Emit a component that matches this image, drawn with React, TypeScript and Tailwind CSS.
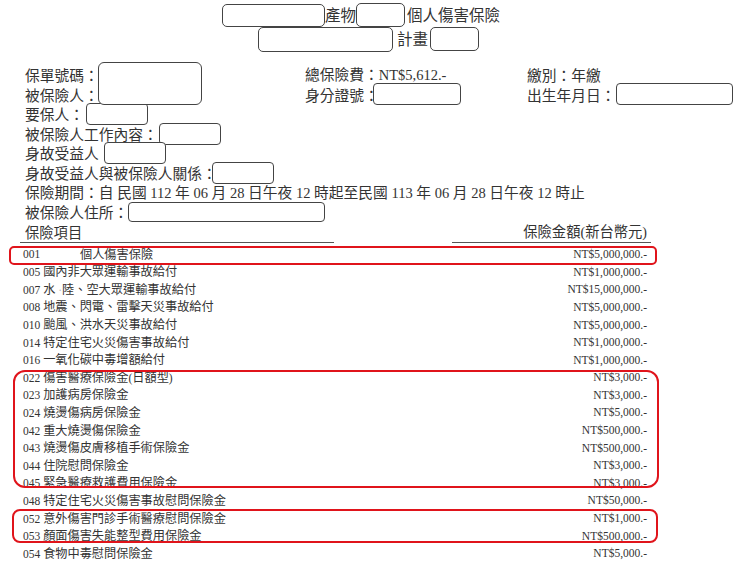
import React from "react";

const CJK_RE = /([\u2027\u3000-\u303f\u3400-\u9fff\uff00-\uffef]+)/;
const CJK_TEST = /[\u2027\u3000-\u303f\u3400-\u9fff\uff00-\uffef]/;

function Mix({ t, c, l }: { t: string; c: string; l: string }) {
  const parts = t.split(CJK_RE);
  return (
    <span className="whitespace-pre">
      {parts.map((p, i) =>
        p ? (
          <span key={i} className={CJK_TEST.test(p) ? c : l}>
            {p}
          </span>
        ) : null
      )}
    </span>
  );
}

const HC = "font-['Noto_Sans_CJK_TC',sans-serif] text-[15.5px]";
const FC = "font-['Noto_Sans_CJK_TC',sans-serif] text-[14.75px]";
const FL = "font-['Liberation_Serif',serif] text-[14.5px]";
const RC = "font-['Noto_Sans_CJK_TC',sans-serif] text-[12.2px] leading-[17.6px]";
const RL = "font-['Liberation_Serif',serif] text-[11.5px] leading-[17.6px]";

function F({ t }: { t: string }) {
  return <Mix t={t} c={FC} l={FL} />;
}

const rows: [string, string, string][] = [
  ["005", "國內非大眾運輸事故給付", "NT$1,000,000.-"],
  ["007", "水 ·陸、空大眾運輸事故給付", "NT$15,000,000.-"],
  ["008", "地震、閃電、雷擊天災事故給付", "NT$5,000,000.-"],
  ["010", "颱風、洪水天災事故給付", "NT$5,000,000.-"],
  ["014", "特定住宅火災傷害事故給付", "NT$1,000,000.-"],
  ["016", "一氧化碳中毒增額給付", "NT$1,000,000.-"],
  ["022", "傷害醫療保險金(日額型)", "NT$3,000.-"],
  ["023", "加護病房保險金", "NT$3,000.-"],
  ["024", "燒燙傷病房保險金", "NT$5,000.-"],
  ["042", "重大燒燙傷保險金", "NT$500,000.-"],
  ["043", "燒燙傷皮膚移植手術保險金", "NT$500,000.-"],
  ["044", "住院慰問保險金", "NT$3,000.-"],
  ["045", "緊急醫療救護費用保險金", "NT$3,000.-"],
  ["048", "特定住宅火災傷害事故慰問保險金", "NT$50,000.-"],
  ["052", "意外傷害門診手術醫療慰問保險金", "NT$1,000.-"],
  ["053", "顏面傷害失能整型費用保險金", "NT$500,000.-"],
  ["054", "食物中毒慰問保險金", "NT$5,000.-"],
];

const BOX = "inline-block shrink-0 rounded-[4px] border-[1.5px] border-[#444] bg-white";

export default function App() {
  return (
    <div className="relative w-[740px] h-[568px] overflow-hidden bg-white text-[#333] font-['Noto_Sans_CJK_TC',sans-serif]">
      {/* Title */}
      <div className="pt-[3px]">
        <div className={`flex h-[24px] items-center pl-[222px] ${HC}`}>
          <span className="inline-block h-[23px] w-[103px] shrink-0 rounded-[5px] border-[1.5px] border-[#444] bg-white" />
          <span>產物</span>
          <span className="inline-block h-[24px] w-[49px] shrink-0 rounded-[5px] border-[1.5px] border-[#444] bg-white" />
          <span className="ml-[2px]">個人傷害保險</span>
        </div>
        <div className={`flex h-[24px] items-center pl-[258px] ${HC}`}>
          <span className="inline-block h-[25px] w-[135px] shrink-0 rounded-[5px] border-[1.5px] border-[#444] bg-white" />
          <span className="ml-[4px]">計畫</span>
          <span className="ml-[2px] inline-block h-[24px] w-[49px] shrink-0 rounded-[5px] border-[1.5px] border-[#444] bg-white" />
        </div>
      </div>

      {/* Policy info */}
      <div className="mt-[14px] pl-[25px] text-[14.75px] leading-[19.6px]">
        <div className="flex h-[19.6px] items-center">
          <div className="relative flex w-[280px] items-center">
            <F t="保單號碼：" />
            <span className="absolute left-[73px] top-[-3px] h-[43px] w-[104px] rounded-[6px] border-[1.5px] border-[#444] bg-white" />
          </div>
          <div className="flex w-[222px] items-center">
            <F t="總保險費：NT$5,612.-" />
          </div>
          <div className="flex items-center">
            <F t="繳別：年繳" />
          </div>
        </div>
        <div className="flex h-[19.6px] items-center">
          <div className="flex w-[280px] items-center">
            <F t="被保險人：" />
          </div>
          <div className="flex w-[222px] items-center">
            <F t="身分證號：" />
            <span className={`ml-[-6px] h-[22px] w-[88px] ${BOX}`} />
          </div>
          <div className="flex items-center">
            <F t="出生年月日：" />
            <span className={`h-[22px] w-[117px] ${BOX}`} />
          </div>
        </div>
        <div className="flex h-[19.6px] items-center">
          <F t="要保人：" />
          <span className={`ml-[2px] h-[22px] w-[62px] ${BOX}`} />
        </div>
        <div className="flex h-[19.6px] items-center">
          <F t="被保險人工作內容：" />
          <span className={`ml-[1px] h-[22px] w-[62px] ${BOX}`} />
        </div>
        <div className="flex h-[19.6px] items-center">
          <F t="身故受益人" />
          <span className={`ml-[5px] h-[22px] w-[62px] ${BOX}`} />
        </div>
        <div className="flex h-[19.6px] items-center">
          <F t="身故受益人與被保險人關係：" />
          <span className={`ml-[-5px] h-[22px] w-[62px] ${BOX}`} />
        </div>
        <div className="flex h-[19.6px] items-center">
          <F t="保險期間：自 民國 112 年 06 月 28 日午夜 12 時起至民國 113 年 06 月 28 日午夜 12 時止" />
        </div>
        <div className="flex h-[19.6px] items-center">
          <F t="被保險人住所：" />
          <span className={`h-[20px] w-[197px] ${BOX}`} />
        </div>
      </div>

      {/* Table header */}
      <div className="flex h-[21px] items-center text-[14.3px]">
        <div className="ml-[20px] flex h-full w-[314px] items-center border-b border-[#555] pl-[5px]">
          保險項目
        </div>
        <div className="ml-[118px] flex h-full w-[199px] items-center justify-end border-b border-[#555] pr-[4px]">
          <Mix
            t="保險金額(新台幣元)"
            c="font-['Noto_Sans_CJK_TC',sans-serif] text-[14.3px]"
            l="font-['Liberation_Serif',serif] text-[14px]"
          />
        </div>
      </div>

      {/* Rows */}
      <div className="ml-[23px] mt-[3.4px] w-[624px] text-[12.2px] leading-[17.6px]">
        <div className="flex h-[17.6px] items-center justify-between">
          <span className="flex items-center">
            <span className={`w-[57px] ${RL}`}>001</span>
            <span className={RC}>個人傷害保險</span>
          </span>
          <span className={RL}>NT$5,000,000.-</span>
        </div>
        {rows.map(([code, name, amt]) => (
          <div key={code} className="flex h-[17.6px] items-center justify-between">
            {name.startsWith("水") ? (
              <span className="whitespace-pre">
                <span className={RL}>{code} </span>
                <span className={RC}>水</span>
                <span className={`${RL} text-[#bbb]`}> ·</span>
                <span className={RC}>陸、空大眾運輸事故給付</span>
              </span>
            ) : (
              <Mix t={`${code} ${name}`} c={RC} l={RL} />
            )}
            <span className={RL}>{amt}</span>
          </div>
        ))}
      </div>

      {/* Red annotation boxes */}
      <div className="absolute left-[9px] top-[246px] h-[19px] w-[648px] rounded-[5px] border-2 border-[#e0141b]" />
      <div className="absolute left-[13px] top-[370px] h-[118px] w-[646px] rounded-[12px] border-2 border-[#e0141b]" />
      <div className="absolute left-[12px] top-[509px] h-[34px] w-[646px] rounded-[8px] border-2 border-[#e0141b]" />
    </div>
  );
}
